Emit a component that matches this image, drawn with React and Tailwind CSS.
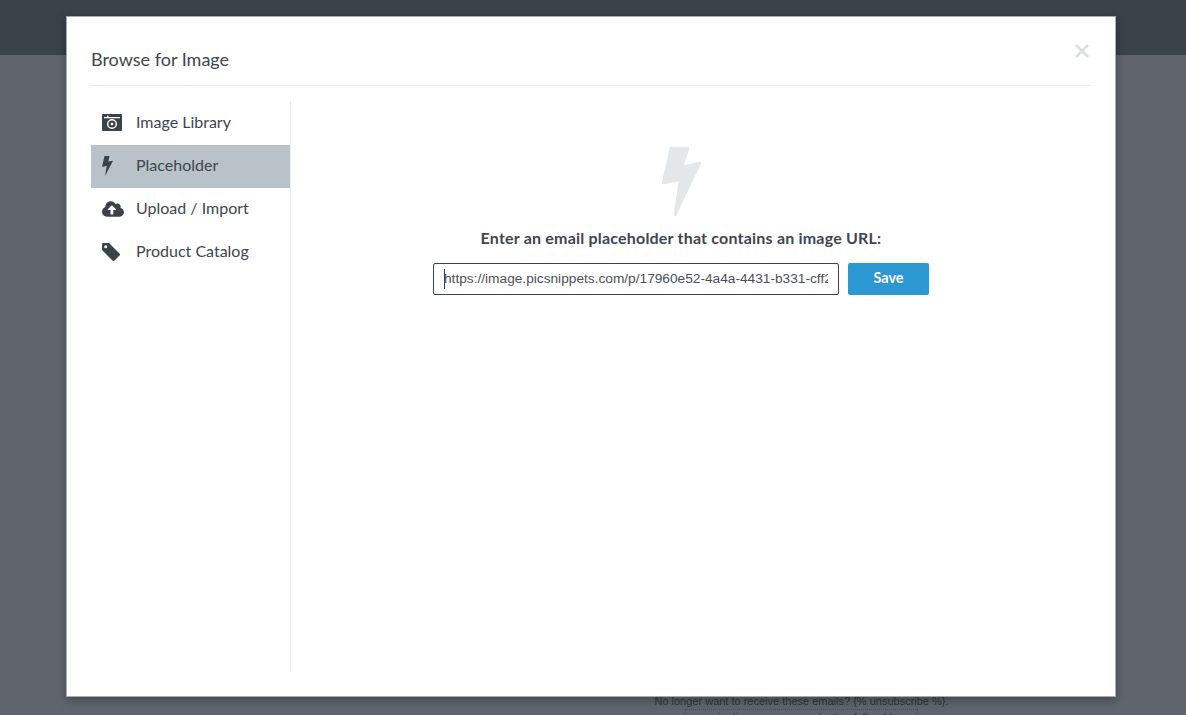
import React from "react";
import { FaCloudUploadAlt } from "react-icons/fa";

const Camera = () => (
  <svg width="20" height="17" viewBox="0 0 20 17" className="text-[#3a424a]">
    <rect width="20" height="17" rx="1" fill="currentColor" />
    <path fill="#ffffff" d="M2 3h3V1.500h1.500V3H18v1.200H2z" />
    <circle cx="10" cy="10" r="4.300" fill="none" stroke="#ffffff" strokeWidth="1.400" />
    <circle cx="10" cy="10" r="1.300" fill="#ffffff" />
  </svg>
);

const SmallBolt = () => (
  <svg width="11" height="20" viewBox="0 0 11 20" className="text-[#3a424a]">
    <path fill="currentColor" d="M2.500 0h5L6.300 5.500 11 4.700 3 20l1.800-10.200L0 11z" />
  </svg>
);

const Tag = () => (
  <svg width="18" height="18" viewBox="0 0 18 18" className="text-[#3a424a]">
    <path fill="currentColor" fillRule="evenodd" d="M0 1.200A1.200 1.200 0 0 1 1.200 0H7l10.500 10.400a1.500 1.500 0 0 1 0 2.100l-5 5a1.500 1.500 0 0 1-2.100 0L0 7zM3.700 5.200a1.500 1.500 0 1 0 0-3 1.500 1.500 0 0 0 0 3z" />
  </svg>
);

const BigBolt = () => (
  <svg width="40" height="72" viewBox="0 0 40 72" className="text-[#e4e7ea]">
    <path fill="currentColor" stroke="currentColor" strokeWidth="2.500" strokeLinejoin="round" d="M9 2h17l-6 19 18-4-25 52 5-35-17 3z" />
  </svg>
);

const items = [
  { label: "Image Library", icon: <Camera /> },
  { label: "Placeholder", icon: <SmallBolt />, active: true },
  { label: "Upload / Import", icon: <FaCloudUploadAlt className="text-[22px] text-[#3a424a]" /> },
  { label: "Product Catalog", icon: <Tag /> },
];

export default function App() {
  return (
    <div className="relative h-[715px] overflow-hidden bg-[#5f646d] font-['Lato',sans-serif] text-[#3e4650]">
      <div className="h-[55px] bg-[#3a424a]" />
      <div className="flex h-[660px] flex-col items-center pt-[640px] pl-[417px] font-['Liberation_Sans',sans-serif] text-[11px] leading-[13px] text-[#2e343b]">
        <p className="whitespace-nowrap">No longer want to receive these emails? {"{% unsubscribe %}"}.</p>
        <p className="mt-[1px] border border-dotted border-[#4a4f57] px-[4px] pt-[1px] whitespace-nowrap">organization.name - organization.full_address</p>
      </div>

      <div className="absolute top-[16px] left-[66px] flex h-[681px] w-[1050px] flex-col border border-[#a8abaf] bg-white px-[24px] shadow-[0_3px_9px_rgba(0,0,0,0.3)]">
        <header className="relative h-[69px] shrink-0 border-b border-[#e9ebed]">
          <h2 className="pt-[30px] text-[18px] leading-[24px] font-normal">Browse for Image</h2>
          <span className="absolute top-[26px] right-[1px] text-[#dcdfe2]">
            <svg width="16" height="16" viewBox="0 0 16 16">
              <path d="M2 2l12 12M14 2L2 14" stroke="currentColor" strokeWidth="2.800" />
            </svg>
          </span>
        </header>

        <div className="mt-[15px] flex h-[571px]">
          <nav className="w-[200px] shrink-0 border-r border-[#e9ebed] pt-px">
            {items.map((it) => (
              <div
                key={it.label}
                className={`flex h-[43px] w-[199px] items-center text-[16px] ${it.active ? "bg-[#b9c1c9]" : ""}`}
              >
                <span className="flex w-[45px] shrink-0 items-center pb-[2px] pl-[11px]">{it.icon}</span>
                <span className="pb-[4px]">{it.label}</span>
              </div>
            ))}
          </nav>

          <main className="flex flex-1 flex-col items-center pt-[45px] pr-[20px]">
            <div className="pl-[1px]">
              <BigBolt />
            </div>
            <p className="mt-[9px] text-[16px] leading-[22px] font-bold tracking-[0.2px]">
              Enter an email placeholder that contains an image URL:
            </p>
            <div className="mt-[14px] flex gap-[9px]">
              <div className="relative h-[32px] w-[406px] rounded-[2px] border border-[#3a424a] bg-white px-[10px] font-['Liberation_Sans',sans-serif] text-[13.700px] leading-[30px] text-[#4a5058]">
                <span className="absolute top-[5px] left-[10px] h-[20px] w-px bg-[#3a424a]" />
                <div className="overflow-hidden whitespace-nowrap">https://image.picsnippets.com/p/17960e52-4a4a-4431-b331-cff2a8e0d1b7</div>
              </div>
              <button className="h-[32px] w-[81px] rounded-[2px] bg-[#2b97d3] pb-[3px] text-[14.500px] font-bold text-white">Save</button>
            </div>
          </main>
        </div>
      </div>
    </div>
  );
}
